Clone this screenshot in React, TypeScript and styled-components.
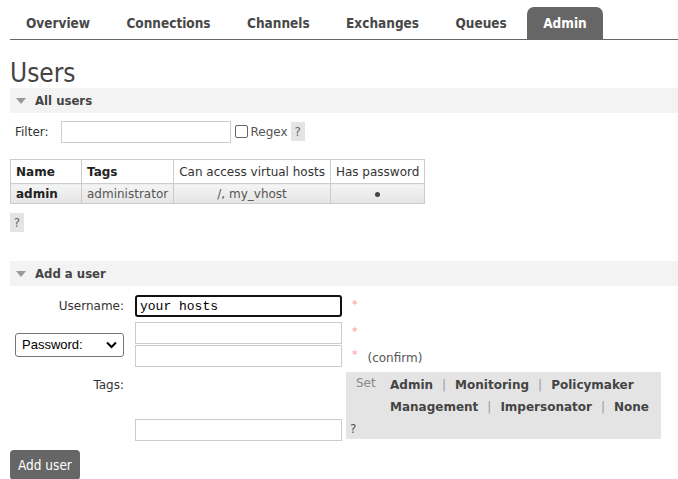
import React, { useState } from 'react';
import styled, { createGlobalStyle } from 'styled-components';

const narrow = '"DejaVu Sans Condensed", "Liberation Sans Narrow", sans-serif';

const GlobalStyle = createGlobalStyle`
  html, body {
    margin: 0;
    padding: 0;
    background: #fff;
  }
  body {
    font: 12px "DejaVu Sans", Verdana, sans-serif;
    color: #484848;
    overflow: hidden;
  }
`;

const Page = styled.div`
  padding: 7px 0 0 10px;
`;

const Tabs = styled.ul`
  display: flex;
  list-style: none;
  margin: 0;
  padding: 0;
  border-bottom: 1px solid #666;
  height: 32px;
`;

const Tab = styled.li<{ $active?: boolean }>`
  display: flex;
  align-items: center;
  padding: 0 16px;
  margin-right: 4.4px;
  height: 32px;
  font: bold 13.5px ${narrow};
  color: ${p => (p.$active ? '#fff' : '#484848')};
  background: ${p => (p.$active ? '#666' : 'transparent')};
  border-radius: 7px 7px 0 0;
`;

const Title = styled.h1`
  margin: 18px 0 0;
  font: 26px ${narrow};
  color: #444;
  line-height: 30px;
`;

const SectionHeader = styled.div<{ $top?: number }>`
  display: flex;
  align-items: center;
  gap: 9px;
  height: 25px;
  padding-left: 6px;
  margin-top: ${p => p.$top ?? 0}px;
  background: #f3f3f3;
  font: bold 13px ${narrow};
  color: #444;
`;

const Triangle = styled.span`
  width: 0;
  height: 0;
  border-left: 5px solid transparent;
  border-right: 5px solid transparent;
  border-top: 6px solid #999;
`;

const FilterRow = styled.div`
  display: flex;
  align-items: center;
  margin: 8px 0 0 5px;
  height: 21px;
`;

const Label = styled.label`
  color: #333;
  margin-right: 12px;
`;

const TextInput = styled.input<{ $w: number; $focus?: boolean }>`
  box-sizing: border-box;
  width: ${p => p.$w}px;
  height: 22px;
  border: ${p => (p.$focus ? '2px solid #111' : '1px solid #ccc')};
  border-radius: ${p => (p.$focus ? '3px' : '0')};
  padding: 0 3px;
  font: 13px "Liberation Mono", monospace;
  color: #000;
  outline: none;
  background: #fff;
`;

const Check = styled.span`
  box-sizing: border-box;
  width: 13px;
  height: 13px;
  border: 1px solid #666;
  border-radius: 2px;
  margin: 0 3px 0 4px;
`;

const Muted = styled.span`
  color: #555;
`;

const Help = styled.span<{ $m?: string }>`
  display: inline-flex;
  align-items: center;
  justify-content: center;
  width: 14px;
  height: 19px;
  background: #e4e4e4;
  color: #666;
  margin: ${p => p.$m ?? '0'};
`;

const UsersTable = styled.table`
  border-collapse: collapse;
  margin-top: 17px;
  th, td {
    border: 1px solid #ccc;
    padding: 0 5px;
    white-space: nowrap;
  }
  th {
    height: 23px;
    text-align: left;
  }
  td {
    height: 19px;
    background: linear-gradient(#f4f4f4, #e5e5e5);
  }
`;

const Cell = styled.td<{ $center?: boolean; $strong?: boolean }>`
  text-align: ${p => (p.$center ? 'center' : 'left')};
  font-weight: ${p => (p.$strong ? 'bold' : 'normal')};
  color: ${p => (p.$strong ? '#222' : '#555')};
`;

const HeadCell = styled.th<{ $strong?: boolean; $w?: number }>`
  font-weight: ${p => (p.$strong ? 'bold' : 'normal')};
  color: ${p => (p.$strong ? '#222' : '#333')};
  width: ${p => (p.$w ? `${p.$w}px` : 'auto')};
`;

const Dot = styled.span`
  display: inline-block;
  width: 5px;
  height: 5px;
  border-radius: 50%;
  background: #444;
  vertical-align: middle;
`;

const HelpLine = styled.div`
  margin-top: 9px;
  height: 19px;
`;

const Form = styled.div`
  display: grid;
  grid-template-columns: 109px 218px auto;
  margin: 9px 0 0 5px;
  align-items: center;
`;

const FormLabel = styled.div<{ $top?: boolean }>`
  text-align: right;
  color: #333;
  align-self: ${p => (p.$top ? 'start' : 'center')};
  padding-top: ${p => (p.$top ? '11px' : '0')};
`;

const Field = styled.div<{ $mt?: number; $end?: boolean }>`
  display: flex;
  flex-direction: column;
  gap: 1px;
  padding-left: 11px;
  margin-top: ${p => p.$mt ?? 0}px;
  align-self: ${p => (p.$end ? 'end' : 'center')};
`;

const Side = styled.div<{ $mt?: number }>`
  display: flex;
  flex-direction: column;
  gap: 1px;
  margin-top: ${p => p.$mt ?? 0}px;
`;

const Req = styled.span`
  display: flex;
  align-items: flex-start;
  height: 22px;
  padding: 3px 0 0 10px;
  box-sizing: border-box;
  color: #f99;
  font-size: 11px;
  gap: 10px;
`;

const Confirm = styled.span`
  color: #555;
  font-size: 12px;
  padding-top: 3px;
`;

const Select = styled.div`
  box-sizing: border-box;
  display: flex;
  align-items: center;
  justify-content: space-between;
  width: 109px;
  height: 24px;
  margin-top: 5px;
  border: 1px solid #767676;
  border-radius: 3px;
  padding: 0 6px;
  font: 13px "Liberation Sans", Arial, sans-serif;
  color: #000;
`;

const TagBox = styled.div`
  margin: 5px 0 2px 4px;
  width: 315px;
  height: 67px;
  background: #e4e4e4;
  display: grid;
  grid-template-columns: 34px auto;
  grid-template-rows: 22px 22px 1fr;
  padding: 2px 0 0 10px;
  box-sizing: border-box;
`;

const SetWord = styled.span`
  color: #888;
  padding-top: 2px;
`;

const Links = styled.div`
  grid-row: span 2;
  font-weight: bold;
  color: #444;
  line-height: 22px;
`;

const Sep = styled.span`
  color: #999;
  font-weight: normal;
  margin: 0 9px;
`;

const TagHelp = styled.span`
  grid-column: 1 / span 2;
  color: #555;
  align-self: end;
  padding-bottom: 3px;
  margin-left: -6px;
`;

const Button = styled.button`
  margin-top: 9px;
  height: 30px;
  padding: 0 8px;
  border: none;
  border-radius: 4px;
  background: #666;
  color: #fff;
  font: 13.5px ${narrow};
`;

const tabs = ['Overview', 'Connections', 'Channels', 'Exchanges', 'Queues'];
const tagLinks = [['Admin', 'Monitoring', 'Policymaker'], ['Management', 'Impersonator', 'None']];

const App: React.FC = () => {
  const [username, setUsername] = useState('your hosts');

  return (
    <>
      <GlobalStyle />
      <Page>
        <Tabs>
          {tabs.map(t => (
            <Tab key={t}>{t}</Tab>
          ))}
          <Tab $active>Admin</Tab>
        </Tabs>

        <Title>Users</Title>
        <SectionHeader>
          <Triangle />
          All users
        </SectionHeader>

        <FilterRow>
          <Label>Filter:</Label>
          <TextInput $w={170} />
          <Check />
          <Muted>Regex</Muted>
          <Help $m="0 0 0 3px">?</Help>
        </FilterRow>

        <UsersTable>
          <thead>
            <tr>
              <HeadCell $strong $w={60}>Name</HeadCell>
              <HeadCell $strong>Tags</HeadCell>
              <HeadCell>Can access virtual hosts</HeadCell>
              <HeadCell>Has password</HeadCell>
            </tr>
          </thead>
          <tbody>
            <tr>
              <Cell $strong>admin</Cell>
              <Cell>administrator</Cell>
              <Cell $center>/, my_vhost</Cell>
              <Cell $center>
                <Dot />
              </Cell>
            </tr>
          </tbody>
        </UsersTable>

        <HelpLine>
          <Help>?</Help>
        </HelpLine>

        <SectionHeader $top={29}>
          <Triangle />
          Add a user
        </SectionHeader>

        <Form>
          <FormLabel>Username:</FormLabel>
          <Field>
            <TextInput $w={207} $focus value={username} onChange={e => setUsername(e.target.value)} />
          </Field>
          <Side>
            <Req>*</Req>
          </Side>

          <Select>
            Password:
            <svg width="11" height="8" viewBox="0 0 11 8">
              <path d="M1 1.5 L5.5 6 L10 1.5" stroke="#000" strokeWidth="2" fill="none" />
            </svg>
          </Select>
          <Field $mt={5}>
            <TextInput $w={207} type="password" />
            <TextInput $w={207} type="password" />
          </Field>
          <Side $mt={5}>
            <Req>*</Req>
            <Req>
              *<Confirm>(confirm)</Confirm>
            </Req>
          </Side>

          <FormLabel $top>Tags:</FormLabel>
          <Field $end>
            <TextInput $w={207} />
          </Field>
          <TagBox>
            <SetWord>Set</SetWord>
            <Links>
              {tagLinks.map((row, i) => (
                <div key={i}>
                  {row.map((l, j) => (
                    <React.Fragment key={l}>
                      {j > 0 && <Sep>|</Sep>}
                      {l}
                    </React.Fragment>
                  ))}
                </div>
              ))}
            </Links>
            <span />
            <TagHelp>?</TagHelp>
          </TagBox>
        </Form>

        <Button>Add user</Button>
      </Page>
    </>
  );
};

export default App;
